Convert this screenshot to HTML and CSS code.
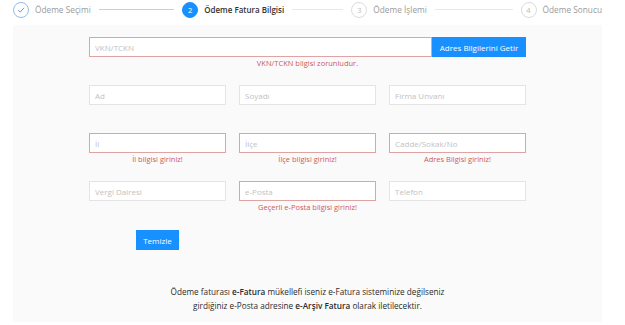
FILE: index.html
```html
<!DOCTYPE html>
<html lang="tr">
<head>
    <meta charset="UTF-8">
    <meta name="viewport" content="width=device-width, initial-scale=1.0">
    <title>Ödeme Fatura Bilgisi</title>
    <link rel="stylesheet" href="styles.css">
</head>
<body>
    <div class="steps">
        <div class="step done">
            <span class="step-icon">
                <svg width="8" height="8" viewBox="0 0 10 10"><path d="M1.5 5.2 L4 7.6 L8.6 2.4" fill="none" stroke="#3d8fe0" stroke-width="1.1"/></svg>
            </span>
            <span class="step-title">Ödeme Seçimi</span>
        </div>
        <div class="step active">
            <span class="step-icon">2</span>
            <span class="step-title">Ödeme Fatura Bilgisi</span>
        </div>
        <div class="step">
            <span class="step-icon">3</span>
            <span class="step-title">Ödeme İşlemi</span>
        </div>
        <div class="step">
            <span class="step-icon">4</span>
            <span class="step-title">Ödeme Sonucu</span>
        </div>
    </div>

    <div class="panel">
        <form class="invoice-form">
            <div class="field">
                <div class="search-row">
                    <input type="text" class="has-error" placeholder="VKN/TCKN">
                    <button type="button" class="btn-primary fetch-btn">Adres Bilgilerini Getir</button>
                </div>
                <div class="field-error">VKN/TCKN bilgisi zorunludur.</div>
            </div>

            <div class="grid">
                <div class="field"><input type="text" placeholder="Ad"></div>
                <div class="field"><input type="text" placeholder="Soyadı"></div>
                <div class="field"><input type="text" placeholder="Firma Unvanı"></div>

                <div class="field">
                    <input type="text" class="has-error" placeholder="İl">
                    <div class="field-error">İl bilgisi giriniz!</div>
                </div>
                <div class="field">
                    <input type="text" class="has-error" placeholder="İlçe">
                    <div class="field-error">İlçe bilgisi giriniz!</div>
                </div>
                <div class="field">
                    <input type="text" class="has-error" placeholder="Cadde/Sokak/No">
                    <div class="field-error">Adres Bilgisi giriniz!</div>
                </div>

                <div class="field"><input type="text" placeholder="Vergi Dairesi"></div>
                <div class="field">
                    <input type="text" class="has-error" placeholder="e-Posta">
                    <div class="field-error">Geçerli e-Posta bilgisi giriniz!</div>
                </div>
                <div class="field"><input type="text" placeholder="Telefon"></div>
            </div>

            <button type="button" class="btn-primary clear-btn">Temizle</button>
        </form>

        <p class="note">
            Ödeme faturası <b>e-Fatura</b> mükellefi iseniz e-Fatura sisteminize değilseniz<br>
            girdiğiniz e-Posta adresine <b>e-Arşiv Fatura</b> olarak iletilecektir.
        </p>
    </div>
</body>
</html>
```

FILE: styles.css
```css
* {
    margin: 0;
    padding: 0;
    box-sizing: border-box;
}

body {
    font-family: 'Open Sans', 'Noto Sans', sans-serif;
    font-size: 8px;
    color: #333;
    background: #fff;
}

/* steps */
.steps {
    display: flex;
    align-items: center;
    height: 19px;
    margin: 0 23px 6px 13px;
}

.step {
    flex: 1;
    display: flex;
    align-items: center;
    padding-right: 8px;
}

.step:last-child {
    flex: none;
    padding-right: 0;
}

.step::after {
    content: "";
    flex: 1;
    height: 1px;
    margin-left: 8px;
    background: #e8e8e8;
}

.step:last-child::after {
    display: none;
}

.step.done::after {
    background: #b5d3f2;
}

.step-icon {
    width: 16px;
    height: 16px;
    border-radius: 50%;
    border: 1px solid #dcdcdc;
    color: #bbb;
    font-size: 7.5px;
    display: flex;
    align-items: center;
    justify-content: center;
    flex: none;
}

.step.done .step-icon {
    border-color: #8fbdec;
}

.step.active .step-icon {
    background: #1890ff;
    border-color: #1890ff;
    color: #fff;
}

.step-title {
    margin-left: 6px;
    font-size: 8.3px;
    color: #9a9a9a;
    white-space: nowrap;
}

.step.active .step-title {
    color: #333;
    font-weight: 600;
    font-size: 8px;
}

/* panel */
.panel {
    background: #fafafa;
    margin: 0 23px 0 13px;
    height: 297px;
    padding-top: 12px;
}

.invoice-form {
    width: 437px;
    margin: 0 auto;
}

.field {
    height: 48px;
}

.search-row {
    display: flex;
}

.search-row input {
    flex: 1;
}

input {
    display: block;
    width: 100%;
    height: 20px;
    padding: 0 5px;
    border: 1px solid #e4e4e4;
    background: #fff;
    font-family: inherit;
    font-size: 8px;
    outline: none;
}

input::placeholder {
    color: #c2c2c2;
}

input.has-error {
    border-color: #e0a3a3;
}

.field-error {
    text-align: center;
    color: #d0575a;
    font-size: 7.5px;
    line-height: 12px;
}

.grid {
    display: grid;
    grid-template-columns: repeat(3, 1fr);
    column-gap: 13px;
}

.btn-primary {
    background: #1890ff;
    color: #fff;
    border: none;
    font-family: inherit;
    font-size: 8px;
    height: 20px;
    cursor: pointer;
}

.fetch-btn {
    width: 94px;
    flex: none;
}

.clear-btn {
    width: 43px;
    margin: 1px 0 0 47px;
}

.note {
    margin-top: 35px;
    text-align: center;
    font-size: 8.2px;
    line-height: 14px;
    color: #2b2b2b;
}

.note b {
    font-weight: 600;
}
```
